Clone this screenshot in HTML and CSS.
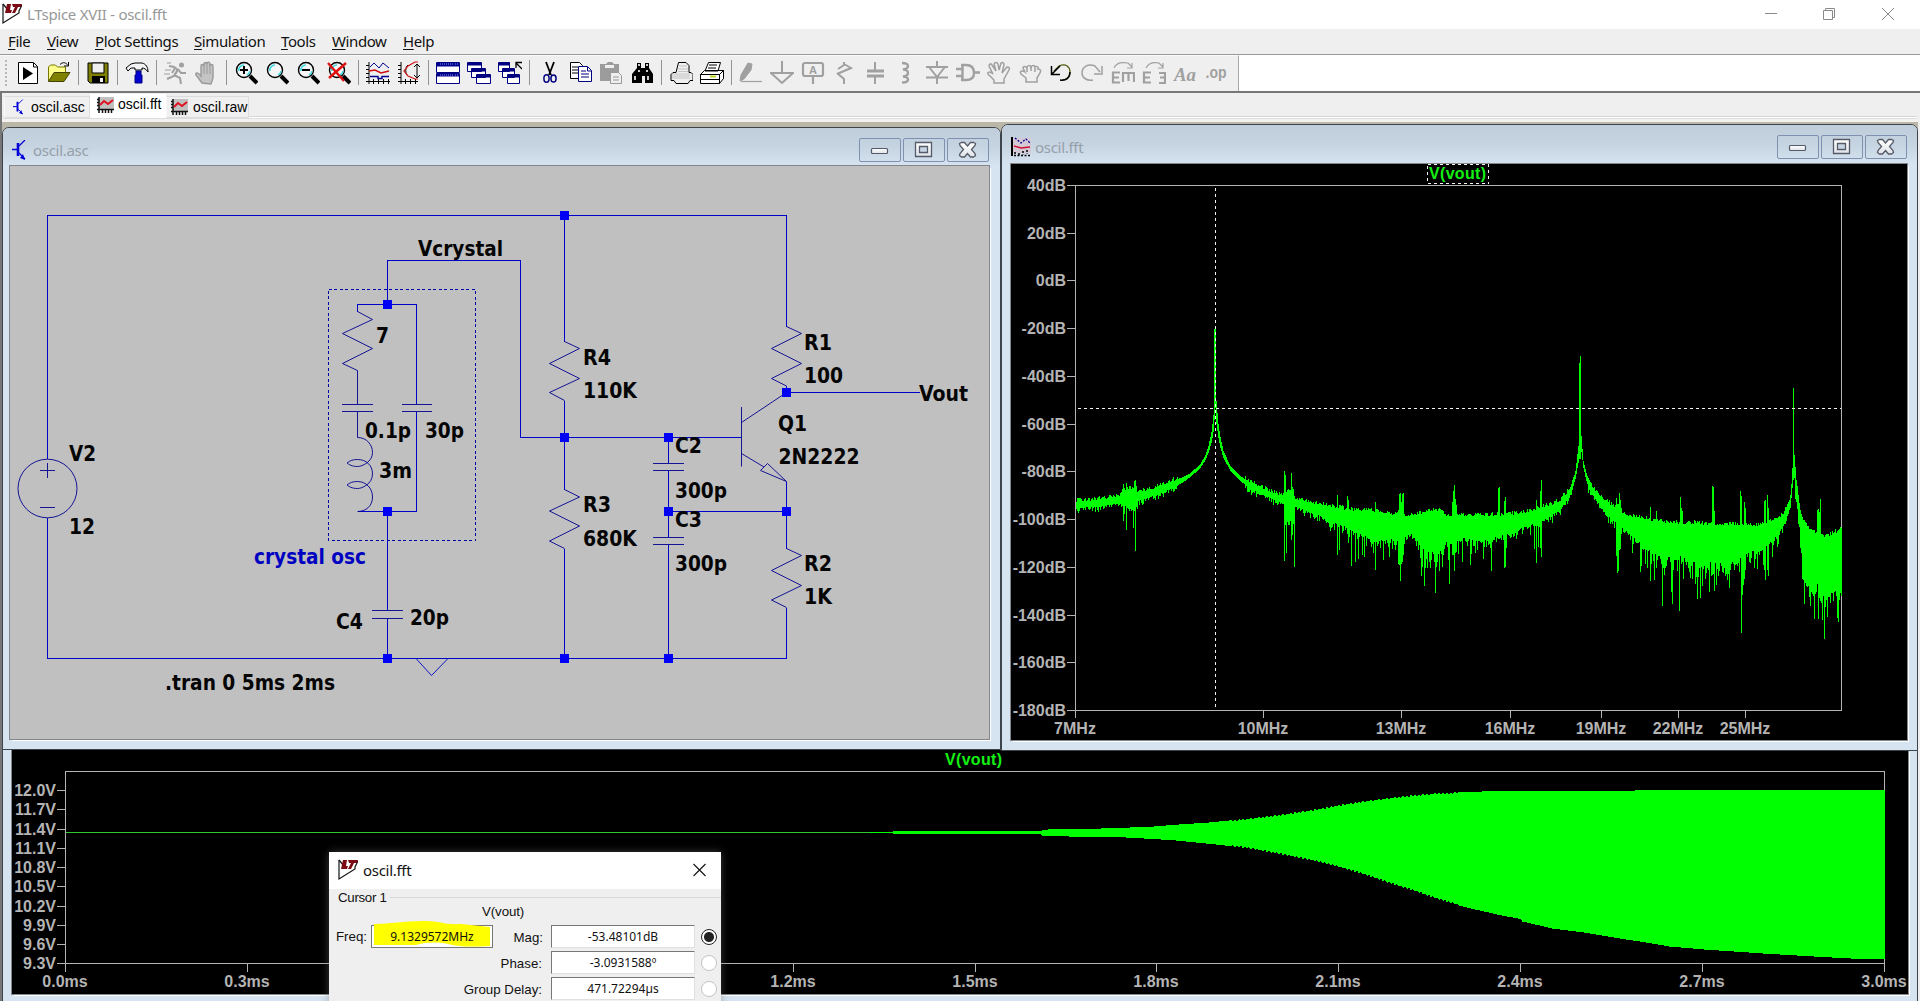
FILE: index.html
```html
<!DOCTYPE html>
<html lang="en">
<head>
<meta charset="utf-8">
<title>LTspice XVII - oscil.fft</title>
<link rel="stylesheet" href="styles.css">
</head>
<body>
<svg width="0" height="0" class="defs">
  <defs>
    <symbol id="lt" viewBox="0 0 20 22">
      <path d="M1 1V20L17 10V8L20 2" fill="none" stroke="#111" stroke-width="1.2"/>
      <path d="M1 1l5 6" stroke="#111" stroke-width="1.2"/>
      <path d="M5 1h4L8 7h2l-1 3H3zM10 1h10l-1 3h-3l-3 6h-3l3-6h-2z" fill="#7a0a14"/>
    </symbol>
    <symbol id="npn" viewBox="0 0 16 20">
      <path d="M0 9.500h5" stroke="#0000d8" stroke-width="1.400"/>
      <path d="M6 3v13" stroke="#0000d8" stroke-width="2.600"/>
      <path d="M7 6l6-6M7 13l6 6" stroke="#0000d8" stroke-width="1.200" fill="none"/>
      <path d="M13 20l-5-2 3-4z" fill="#0000d8"/>
    </symbol>
    <symbol id="wave" viewBox="0 0 17 16">
      <path d="M2 0h15v12H2z" fill="#c0c0c0"/>
      <path d="M2 0v16M0 12.500h17M0 2.500h2M0 5.500h2M0 8.500h2M5.500 12v4M8.500 12v4M11.500 12v4M14.500 12v4" stroke="#111" stroke-width="1.500"/>
      <path d="M3 8l4-4 4 3 5-4" fill="none" stroke="#e01020" stroke-width="2"/>
    </symbol>
    <symbol id="lens" viewBox="0 0 24 24">
      <path d="M15 15l7 7" stroke="#000" stroke-width="4"/>
      <circle cx="9" cy="9" r="7.500" fill="#f6f6f6" stroke="#000" stroke-width="1.400"/>
      <path d="M4 10a5 5 0 0 1 5-6M12 14a5 5 0 0 0 3-4" fill="none" stroke="#3fd8e0" stroke-width="1.600"/>
    </symbol>
    <linearGradient id="btn" x2="0" y2="1"><stop offset="0" stop-color="#fff"/><stop offset="1" stop-color="#dfe3e8"/></linearGradient>
    <symbol id="wmin" viewBox="0 0 40 22"><rect x="11.500" y="9.500" width="16" height="5" rx="1" fill="url(#btn)" stroke="#555b68" stroke-width="1.200"/></symbol>
    <symbol id="wmax" viewBox="0 0 40 22"><path d="M11.500 3.500h16v14h-16zM15.500 7.500v6h8v-6z" fill="url(#btn)" stroke="#555b68" stroke-width="1.300" fill-rule="evenodd"/></symbol>
    <symbol id="wclose" viewBox="0 0 40 22"><path d="M11.500 4.500l2-1h3l3 3.500 3-3.500h3l2 1-.5 2-3.500 4 3.500 4 .5 2-2 1.500h-3l-3-3.500-3 3.500h-3l-2-1.500.5-2 3.500-4-3.500-4z" fill="url(#btn)" stroke="#555b68" stroke-width="1.300"/></symbol>
  </defs>
</svg>

<header class="titlebar">
  <svg class="logo"><use href="#lt"/></svg>
  <span class="app-title">LTspice XVII - oscil.fft</span>
  <svg class="sysbuttons" viewBox="0 0 132 14" fill="none" stroke="#8a8a8a">
    <path d="M0 5.500h12M58.500 2.500h9v9h-9zM60.500 2V.500h9v9h-2M117 0l12 12M129 0l-12 12"/>
  </svg>
</header>

<nav class="menubar">
  <span class="m1"><u>F</u>ile</span><span class="m2"><u>V</u>iew</span><span class="m3"><u>P</u>lot Settings</span><span class="m4"><u>S</u>imulation</span><span class="m5"><u>T</u>ools</span><span class="m6"><u>W</u>indow</span><span><u>H</u>elp</span>
</nav>

<div class="toolrow">
<div class="toolbar">
  <i class="grip"></i>
  <svg viewBox="0 0 24 24"><path d="M2.500 1.500h15l4 4v17h-19z" fill="#fff" stroke="#000"/><path d="M17.500 2v4h4" fill="none" stroke="#000"/><path d="M7 6v13l10-6.500z"/></svg>
  <svg viewBox="0 0 24 24"><path d="M1.500 20V6l2-2h5l2 2h8v5" fill="#ffff8c" stroke="#777700"/><path d="M1.500 20.500L7 11.500h16l-6 9z" fill="#808000" stroke="#444400"/><path d="M13 3.500c3-3 6-2 8 1M21.500 1v4H17" fill="none" stroke="#000"/></svg>
  <i class="sep"></i>
  <svg viewBox="0 0 24 24"><path d="M2 2h20v20H4l-2-2z" fill="#808000" stroke="#000"/><path d="M6 2h12v10H6z" fill="#efefef" stroke="#000"/><path d="M6 15h13v7H6z"/><path d="M14 17h3v4h-3z" fill="#efefef"/></svg>
  <i class="sep"></i>
  <svg viewBox="0 0 24 24"><path d="M1 7l5-4 4-1h7c4 1 6 4 6 9-2-3-4-4-6-4v2h-7V7H6l-3 3z" fill="#f4f4f4" stroke="#000"/><path d="M11 10h5v4h1v8h-7v-8h1z" fill="#0000d0" stroke="#000080"/></svg>
  <i class="sep"></i>
  <svg viewBox="0 0 24 24" fill="none" stroke="#a0a0a0" stroke-width="2"><circle cx="17.500" cy="4" r="2.500" fill="#a0a0a0" stroke="none"/><path d="M5 5l5 1 4 3-4 6-7 3M14 8l3 4h5M10 14l6 3 1 6M11 7l-3 5"/><path d="M3 2h4M1 9h6M0 13h6M13 9l-3 5" stroke-width="1.200"/></svg>
  <svg viewBox="0 0 24 24"><path d="M7 22l-6-8c-1-3 2-3 5 1V5c0-2 3-2 3 0V3c0-2 3-2 3 0 0-3 3-2 3 0v2c0-2 3-2 3 0v12l-2 6z" fill="#c4c4c4" stroke="#999" stroke-width="1.400"/><path d="M9 4v9M12 3v10M15 4v9" stroke="#999"/></svg>
  <i class="sep"></i>
  <svg viewBox="-1 0 24 24"><use href="#lens" width="24" height="24"/><path d="M5 9h8M9 5v8" stroke="#000" stroke-width="2"/></svg>
  <svg viewBox="-1 0 24 24"><use href="#lens" width="24" height="24"/></svg>
  <svg viewBox="-1 0 24 24"><use href="#lens" width="24" height="24"/><path d="M5 9h8" stroke="#000" stroke-width="2"/></svg>
  <svg viewBox="-1 0 24 24"><use href="#lens" width="24" height="24"/><path d="M0 2l16 18M18 2L1 17" stroke="#e01010" stroke-width="2.400"/></svg>
  <i class="sep"></i>
  <svg viewBox="0 0 24 24" fill="none"><path d="M3 1v22M0 20.500h24M0 4.500h3M0 8.500h3M0 12.500h3M0 16.500h3M7.500 18v5M12.500 18v5M17.500 18v5M22.500 18v5" stroke="#000"/><path d="M4 6l4-4 5 5 4-5 6 5" stroke="#000090"/><path d="M3 10l6-1 6 3 8-2" stroke="#d01010" stroke-width="1.400"/><path d="M4 15.500h8v2h4v-2h7" stroke="#000090" stroke-width="1.400"/></svg>
  <svg viewBox="-1 0 24 24" fill="none"><path d="M3 1v22M0 20.500h20M0 4.500h3M0 8.500h3M0 12.500h3M0 16.500h3M7.500 18v5M12.500 18v5M17.500 18v5M10 4c-3 2-3 9 0 11M19 3v14M16 6l3-3 3 3M16 14l3 3 3-3" stroke="#000"/><path d="M20 1h-3l-7 4-4 5 4 5 7 3h3" stroke="#d01010" stroke-width="1.200"/></svg>
  <i class="sep"></i>
  <svg viewBox="0 0 24 24"><g stroke="#000080" fill="#fff"><path d="M.500 1.500h23v10H.5zM.500 12.500h23v10H.5z"/></g><path d="M1 1.500h22v4H1zM1 12.500h22v3H1z" fill="#000090"/><path d="M4 3h13M19 3h3M4 14h13M19 14h3" stroke="#8890e0" stroke-dasharray="1 1"/></svg>
  <svg viewBox="0 0 24 24" fill="#fff" stroke="#000080"><path d="M.500 1.500h14v9H.5zM4.500 7.500h14v9h-14zM9.500 13.500h14v9h-14z"/><path d="M1 3h13M5 9h13M10 15h13" stroke-width="3"/></svg>
  <svg viewBox="0 0 24 24" fill="#fff" stroke="#000080"><path d="M.500 1.500h11v9H.5zM4.500 7.500h12v9h-12zM9.500 13.500h12v9h-12z"/><path d="M1 3h11M5 9h11M10 15h11" stroke-width="3"/><path d="M18 7V1.500h6M18 2l6 6" stroke="#000" stroke-width="1.300" fill="none"/></svg>
  <i class="sep"></i>
  <svg viewBox="-1 0 24 24" fill="none"><path d="M8 1l5 13M16 1l-5 13" stroke="#000" stroke-width="1.800"/><ellipse cx="8.500" cy="17.500" rx="2.600" ry="3.800" stroke="#000080" stroke-width="1.500"/><ellipse cx="15.500" cy="17.500" rx="2.600" ry="3.500" stroke="#000080" stroke-width="1.500"/></svg>
  <svg viewBox="-1 0 24 24"><path d="M1.500 1.500h9l3 3v13h-12z" fill="#fff" stroke="#000"/><path d="M3 6h6M3 9h6M3 12h6" stroke="#000"/><path d="M9.500 5.500h9l4 4v11h-13z" fill="#fff" stroke="#000080"/><path d="M18.500 6v4h4M12 10h5M12 13h8M12 16h8" stroke="#000080" fill="none"/></svg>
  <svg viewBox="0 0 24 24"><path d="M1 3h6l2-2h4l2 2h5v17H1z" fill="#9c9c9c"/><path d="M6 4h9v3H6z" fill="#efefef"/><path d="M11.500 11.500h8l3 3v8h-11z" fill="#efefef" stroke="#999"/><path d="M14 16h6M14 19h6" stroke="#999"/></svg>
  <svg viewBox="-1 0 24 24"><path d="M6 2h4v5h4V2h4v5l4 6v9h-8v-7h-3v7H1v-9l5-6z"/><path d="M8 3v2M16 3v2M4 15v4M17 15v4M8 9v2M16 9v2" stroke="#fff" stroke-width="1.600"/></svg>
  <i class="sep"></i>
  <svg viewBox="-1.500 0 24 24" fill="#efefef" stroke="#000"><path d="M5.500 11.500L8 1.500h7.500l3 3v7h2l2 2v6h-3l-2 3h-12l-2-3h-3v-6l2-2z"/><path d="M2 13h18M2 15h18M2 17h18M9 5h7M8 8h9M8 10.500h9" stroke="#999" stroke-dasharray="1 1"/></svg>
  <svg viewBox="0 0 24 24" fill="#fff" stroke="#000"><path d="M5 10L8.500 1.500h12L18 10zM.500 13.500l4-4h19l-4 4zM.500 13.500h19v9H.5zM19.500 13.500l4-4v8l-4 5z"/><path d="M9 4h8M8 7h8" /><path d="M10 15.500h6" stroke="#b8d820" stroke-width="2"/><path d="M1 18.500h18"/></svg>
  <i class="sep"></i>
  <svg viewBox="0 0 24 24" fill="#a0a0a0" stroke="#a0a0a0"><path d="M9 2l4 1-1 6-7 9-4 2 1-6z"/><path d="M2 20.500h21" stroke-width="1.200"/></svg>
  <svg viewBox="0 0 24 24" fill="none" stroke="#a0a0a0" stroke-width="2"><path d="M12 0v12M1 12h22L12 22z"/></svg>
  <svg viewBox="0 0 24 24" fill="none" stroke="#a0a0a0" stroke-width="2.200"><rect x="2" y="2" width="20" height="13" rx="2"/><path d="M12 15v8"/><text x="12" y="12.500" class="ico-a">A</text></svg>
  <svg viewBox="0 0 24 24" fill="none" stroke="#a0a0a0" stroke-width="2"><path d="M12 1v3l-6 4M5 13l14-6-7-4M5 12l7 6v5"/></svg>
  <svg viewBox="0 0 24 24" fill="none" stroke="#a0a0a0"><path d="M12 1v9M12 15v8" stroke-width="2"/><path d="M4 10h17M4 15h17" stroke-width="3"/></svg>
  <svg viewBox="0 0 24 24" fill="none" stroke="#a0a0a0" stroke-width="2.400"><path d="M8 2c4 0 6 1 6 3s-2 3-5 3.500c3 0 5 1.500 5 3.500s-2 3-5 3.500c3 0 5 1 5 3 0 3-3 3-6 3"/></svg>
  <svg viewBox="0 0 24 24" fill="none" stroke="#a0a0a0" stroke-width="2"><path d="M12 0v5M1 6h22M4 6l8 10 8-10M1 16.500h22M12 17v6"/></svg>
  <svg viewBox="0 0 24 24" fill="none" stroke="#a0a0a0" stroke-width="2.400"><path d="M5 4h5c6 0 8 4 8 8s-2 7-8 7H5M6.500 4v15M0 8h6M0 15h6M18 11.500h6"/></svg>
  <svg viewBox="0 0 24 24" fill="none" stroke="#a0a0a0" stroke-width="1.500"><path d="M7 22v-3l-6-6c-1-2 2-3 5 0L2 5c0-2 2-3 3-1l4 6-2-7c1-2 3-2 4 0l1 6 2-7c2-1 3 0 3 2l-2 8 5-6c2 0 3 1 2 3l-5 9v4z"/></svg>
  <svg viewBox="-1 0 24 24" fill="none" stroke="#a0a0a0" stroke-width="1.500"><path d="M7 21v-4l-5-4c-2-3 1-4 4-2l-2-4c0-2 3-2 4 0 0-3 3-3 4-1 1-2 4-2 4 0 2-1 4 0 3 2 3 0 3 2 2 4l-3 5v4z"/><path d="M8 7v4M12 6v4M16 7v4"/></svg>
  <svg viewBox="0 0 24 24" fill="none" stroke="#000"><path d="M5 10l5-5c7-3 11 1 11 6 0 5-4 8-8 8" stroke="#555c10" stroke-width="1.300"/><path d="M21 11c0 6-4 9-10 8M2.500 5v8.500H11M3 13l8-8" stroke-width="1.500"/></svg>
  <svg viewBox="0 0 24 24" fill="none" stroke="#a0a0a0" stroke-width="1.500"><path d="M20 11l-5-6C8 2 2 6 2 12c0 5 5 8 11 7M22 5v8h-8"/></svg>
  <svg viewBox="0 0 24 24" fill="none" stroke="#a0a0a0" stroke-width="1.200"><path d="M3 7c3-6 8-6 14-5l4 4M21 2v5h-5"/><path d="M9 11.500H2v10h7M2 16.500h6M12 21v-9h11v9M17.500 12v8" stroke-width="2.200"/></svg>
  <svg viewBox="0 0 24 24" fill="none" stroke="#a0a0a0" stroke-width="1.200"><path d="M4 7c3-6 8-6 13-5l4 4M21 2v5h-5"/><path d="M9 11.500H2v10h7M2 16.500h6M17 12h6v10h-6M23 16.500h-5" stroke-width="2.200"/></svg>
  <svg viewBox="0 0 24 24"><text x="12" y="19.500" class="ico-aa" textLength="22" lengthAdjust="spacingAndGlyphs">Aa</text></svg>
  <svg viewBox="0 0 24 24"><text x="12" y="17" class="ico-op" textLength="21" lengthAdjust="spacingAndGlyphs">.op</text></svg>
</div>
</div>

<div class="tabbar">
  <div class="tab t-asc"><svg class="i-npn"><use href="#npn"/></svg><span>oscil.asc</span></div>
  <div class="tab t-fft active"><svg class="i-wave"><use href="#wave"/></svg><span>oscil.fft</span></div>
  <div class="tab t-raw"><svg class="i-wave"><use href="#wave"/></svg><span>oscil.raw</span></div>
</div>

<main class="mdi">
  <section class="win raw">
    <svg class="client" viewBox="12 750 1896 244">
      <g class="axis" id="raw-axis"><path d="M65.500 972V771.500H1884.500V972M57 963.500H1884.500"/></g>
      <g class="lbl" id="raw-labels"></g>
      <path class="thin" d="M66 832.500H895"/>
      <path class="trace" id="raw-trace"/>
      <text class="trace-name" x="945" y="765" textLength="57">V(vout)</text>
    </svg>
  </section>

  <section class="win asc">
    <div class="caption">
      <svg class="i-npn"><use href="#npn"/></svg><span>oscil.asc</span>
      <div class="wbtns"><svg><use href="#wmin"/></svg><svg><use href="#wmax"/></svg><svg><use href="#wclose"/></svg></div>
    </div>
    <svg class="client" viewBox="10 166 979 573">
      <g class="wire">
        <path d="M47.500 459V215.500H786.500V326.500M564.500 215.500V341.500M564.500 400.500V489.500M564.500 548.500V658.500M47.500 518V658.500H786.500V607.500M387.500 304.500V260.500H520.500V437.500H741.500M357.500 311.500V304.500H416.500V404.500M416.500 411.500V511.500H357.500M387.500 511.500V610.500M387.500 618.500V658.500M668.500 437.500V463.500M668.500 470.500V537.500M668.500 544.500V658.500M668.500 511.500H786.500M786.500 386V392.500H920M786.500 481.500V548.500"/>
      </g>
      <g class="part">
        <path d="M357.500 311.500L372.500 319.500 342.500 333.500 372.500 348.500 342.500 363.500 357.500 370.500V404.500M342 404.500H373M342 411.500H373M357.500 411.500V437.500M402 404.500H432M402 411.500H432M372 610.500H403M372 618.500H403M653 463.500H684M653 470.500H684M653 537.500H684M653 544.500H684"/>
        <path d="M357.500 437.500C367 437.500 372.500 445 372.500 452.500 372.500 462 362 466.500 357.500 466.500 352 466.500 349 464.500 347 463 350 460.500 353 459.500 357.500 459.500 366 459.500 372.500 465 372.500 474 372.500 484 362 488.500 357.500 488.500 352 488.500 349 486.500 347 485 350 482.500 353 481.500 357.500 481.500 366 481.500 372.500 488 372.500 497 372.500 506 366 511.500 357.500 511.500"/>
        <path d="M564.500 341.500L579.500 348.500 549.500 363.500 579.500 378.500 549.500 392.500 564.500 400.500M564.500 489.500L579.500 497 549.500 511 579.500 526 549.500 541 564.500 548.500M786.500 326.500L801.500 333.500 771.500 348.500 801.500 363.500 771.500 378.500 786.500 386M786.500 548.500L801.500 555.500 771.500 570.500 801.500 585.500 771.500 600 786.500 607.500"/>
        <path d="M741.500 407V466.500M741.500 422.500L786.500 392.500M741.500 453.500L764 467M767.500 463.500L760.500 470.500 786.500 481.500zM40 470.500H55M47.500 463V478M40 507.500H55"/>
        <ellipse cx="47.500" cy="488.500" rx="29.500" ry="29.300"/>
      </g>
      <path class="box" d="M328.500 289.500H475.500V540.500H328.500z"/>
      <path class="gnd" d="M416 658.500L431.500 675.500 448 658.500"/>
      <path class="nodes" d="M560 211h9v9h-9zM383 300h9v9h-9zM383 507h9v9h-9zM383 654h9v9h-9zM560 433h9v9h-9zM560 654h9v9h-9zM664 433h9v9h-9zM664 507h9v9h-9zM664 654h9v9h-9zM782 388h9v9h-9zM782 507h9v9h-9z"/>
      <g class="sch" id="sch-labels">
        <text x="69" y="461" textLength="27">V2</text><text x="69" y="533.500" textLength="26">12</text>
        <text x="254" y="563.500" textLength="112" class="comment">crystal osc</text>
        <text x="418" y="255.500" textLength="85">Vcrystal</text>
        <text x="376" y="342.500" textLength="13">7</text>
        <text x="365" y="438" textLength="46">0.1p</text><text x="425" y="438" textLength="39">30p</text>
        <text x="379" y="477.500" textLength="33">3m</text>
        <text x="336" y="629" textLength="27">C4</text><text x="410" y="624.500" textLength="39">20p</text>
        <text x="165" y="689.500" textLength="170">.tran 0 5ms 2ms</text>
        <text x="583" y="365" textLength="28">R4</text><text x="583" y="398" textLength="54">110K</text>
        <text x="583" y="512" textLength="28">R3</text><text x="583" y="545.500" textLength="54">680K</text>
        <text x="675" y="453" textLength="27">C2</text><text x="675" y="497.500" textLength="52">300p</text>
        <text x="675" y="527" textLength="27">C3</text><text x="675" y="570.500" textLength="52">300p</text>
        <text x="804" y="350" textLength="28">R1</text><text x="804" y="382.500" textLength="39">100</text>
        <text x="778" y="430.500" textLength="29">Q1</text><text x="778.500" y="463.500" textLength="81">2N2222</text>
        <text x="919" y="400.500" textLength="49">Vout</text>
        <text x="804" y="570.500" textLength="28">R2</text><text x="804" y="604" textLength="28">1K</text>
      </g>
    </svg>
  </section>

  <section class="win fft">
    <div class="caption">
      <svg class="i-plot" viewBox="0 0 20 20"><path d="M2 1h18v15H2z" fill="#d4c8d4"/><path d="M1 0v19" stroke="#000" stroke-width="2"/><path d="M3 18.500h17M4 15v4M8 16v3M12 14v4M16 13v4" stroke="#000" stroke-width="1.500" stroke-dasharray="2 1.500"/><path d="M4 1l6 5 5-4 4 4" stroke="#000090" stroke-width="1.300" fill="none" stroke-dasharray="2 1.500"/><path d="M3 9l7 2 9-1" stroke="#d01030" stroke-width="1.400" fill="none"/></svg><span>oscil.fft</span>
      <div class="wbtns"><svg><use href="#wmin"/></svg><svg><use href="#wmax"/></svg><svg><use href="#wclose"/></svg></div>
    </div>
    <svg class="client" viewBox="1011 164 896 576">
      <g class="axis" id="fft-axis"><path d="M1075.500 718V185.500H1841.500V710.500M1067 710.500H1841.500"/></g>
      <g class="lbl" id="fft-labels"></g>
      <path class="trace" id="fft-trace"/>
      <path class="cursor" d="M1215.500 188V708M1078 408.500H1841"/>
      <path class="cursor" d="M1427.500 164.500H1488.500V183.500H1427.500z"/>
      <text class="trace-name" x="1429" y="179" textLength="57">V(vout)</text>
    </svg>
  </section>

  <section class="dialog">
    <div class="dlg-title"><svg class="logo"><use href="#lt"/></svg><span>oscil.fft</span><svg class="dlg-x" viewBox="0 0 13 14"><path d="M.500 1l12 12M12.500 1l-12 12" stroke="#111" stroke-width="1.100"/></svg></div>
    <div class="legend"><span>Cursor 1</span></div>
    <div class="sig">V(vout)</div>
    <div class="grid">
      <label>Freq:</label>
      <div class="field hl"><svg viewBox="0 0 122 28"><path d="M3 3C20 3 30 0 55 0c14 0 18 4 35 3l29 3v19c-20 1-30 1-42-2-12-2-20-2-32 1H3z"/></svg><span>9.1329572MHz</span></div>
      <label>Mag:</label><div class="field">-53.48101dB</div><b class="radio on"></b>
      <label class="wide">Phase:</label><div class="field">-3.0931588º</div><b class="radio"></b>
      <label class="wide">Group Delay:</label><div class="field">471.72294µs</div><b class="radio"></b>
    </div>
  </section>
</main>
<script src="plots.js"></script>
</body>
</html>
```

FILE: styles.css
```css
* { box-sizing: border-box; }
body { margin: 0; width: 1920px; height: 1001px; overflow: hidden; background: #efefef; display: flex; flex-direction: column; font-family: "Noto Sans", "Open Sans", sans-serif; }
.defs { position: absolute; }
svg { display: block; flex: none; }
text { white-space: pre; }

.titlebar { height: 29px; background: #fff; display: flex; align-items: center; padding-left: 2px; flex: none; }
.logo { width: 20px; height: 22px; }
.titlebar .logo { margin-top: -2px; }
.app-title { color: #989898; font-size: 15px; letter-spacing: -.27px; margin-left: 5px; line-height: 26px; padding-bottom: 2px; flex: 1; }
.sysbuttons { width: 132px; height: 14px; margin-right: 23px; }

.menubar { height: 26px; flex: none; border-bottom: 1px solid #999; display: flex; padding-left: 8px; font-size: 15px; letter-spacing: -.4px; line-height: 24px; color: #111; white-space: nowrap; }
.menubar span { flex: none; }
.menubar u { text-underline-offset: 2px; }
.m1 { width: 39px; } .m2 { width: 48px; } .m3 { width: 99px; } .m4 { width: 87px; } .m5 { width: 51px; } .m6 { width: 71px; }

.toolrow { height: 38px; flex: none; background: #fff; border-bottom: 2px solid #777; display: flex; }
.toolbar { width: 1239px; background: #efefef; border-top: 1px solid #fafafa; border-right: 1px solid #a8a8a8; display: flex; align-items: center; gap: 7px; padding: 0 0 2px 5px; }
.toolbar svg { width: 24px; height: 24px; }
.grip { width: 4px; height: 26px; flex: none; background: repeating-linear-gradient(#b8b8b8 0 2px, transparent 2px 4px) 0 0 / 2px 100% no-repeat; }
.sep { width: 1px; height: 25px; background: #929292; flex: none; }
.ico-a { font: bold 11px "Liberation Sans", sans-serif; fill: #a0a0a0; stroke: none; text-anchor: middle; }
.ico-aa { font: italic bold 19px "Liberation Serif", serif; fill: #a0a0a0; text-anchor: middle; }
.ico-op { font: bold 16px "Liberation Sans", sans-serif; fill: #a0a0a0; text-anchor: middle; }

.tabbar { height: 29px; flex: none; display: flex; align-items: flex-start; border-left: 2px solid #777; background: linear-gradient(#efefef 23px, #d6d6d6 23px 24px, #fff 24px 25px, #ddd 25px 26px, #f4f2ee 26px); margin-right: 3px; padding: 1px 0 0 2px; }
.tab { display: flex; align-items: center; height: 22px; margin-top: 2px; border: 1px solid #dcdcdc; border-left-color: #f8f8f8; background: #f0f0f0; font: 14px "Liberation Sans", sans-serif; letter-spacing: 0; }
.tab span { margin-top: -1px; }
.tab.active { background: #fff; height: 24px; margin-top: 0; border-color: #fff; align-items: flex-start; padding-top: 2px; }
.t-asc { width: 86px; padding-left: 8px; gap: 6px; }
.t-fft { width: 76px; padding-left: 6px; gap: 4px; }
.t-raw { width: 83px; padding-left: 4px; gap: 5px; }
.tab .i-npn { width: 12px; height: 16px; }
.tab.active span { line-height: 16px; }
.i-wave { width: 17px; height: 16px; }

.mdi { position: relative; flex: 1; background: #bab7a8; border-left: 2px solid #777; margin-right: 2px; overflow: hidden; }
.win { position: absolute; background: #d6e3f1; border: 1px solid #3d444c; display: flex; flex-direction: column; }
.caption { display: flex; align-items: center; background: linear-gradient(#c0cddb, #c6d3e0 50%, #d6e3f1); color: #96a0aa; font-size: 15px; letter-spacing: -.3px; flex: none; }
.wbtns { display: flex; gap: 2px; margin-left: auto; }
.wbtns svg { width: 42px; height: 24px; border: 1px solid #8090b0; border-radius: 2px; }
.win .client { outline: 1px solid #83878c; box-shadow: 2px 2px 0 #fff; }

/* document windows, placed on the MDI desktop */
.asc { left: 0; top: 5px; width: 999px; height: 623px; border-radius: 7px 7px 0 0; overflow: hidden; }
.asc .caption { height: 38px; padding: 6px 11px 0 9px; gap: 5px; }
.asc .caption .i-npn { width: 16px; height: 20px; }
.asc .client { width: 979px; height: 573px; margin-left: 7px; background: #c0c0c0; }
.fft { left: 999px; top: 2px; width: 917px; height: 627px; border-radius: 7px 7px 0 0; overflow: hidden; }
.fft .caption { height: 39px; padding: 4px 10px 0 9px; gap: 4px; }
.i-plot { width: 20px; height: 20px; }
.fft .client { width: 896px; height: 576px; margin-left: 9px; background: #000; }
.raw { left: 0; top: 620px; width: 1916px; height: 400px; }
.raw .client { width: 1896px; height: 244px; margin: 7px 0 0 9px; background: #000; }

.axis { stroke: #b4b4b4; fill: none; shape-rendering: crispEdges; }
.lbl { fill: #b4b4b4; font: bold 16px "Liberation Sans", sans-serif; }
.trace { stroke: #0f0; stroke-width: 1; fill: none; shape-rendering: crispEdges; }
.thin { stroke: #30c830; }
.trace-name { fill: #14f014; font: bold 16px "Liberation Sans", sans-serif; }
.cursor { stroke: #f4f4f4; fill: none; stroke-dasharray: 3 3; shape-rendering: crispEdges; }

.wire { stroke: #0000c8; fill: none; shape-rendering: crispEdges; }
.part, .gnd { stroke: #000090; fill: none; stroke-width: .9; }
.gnd { stroke: #0000c8; }
.box { stroke: #0000a8; fill: none; stroke-dasharray: 3 2.500; shape-rendering: crispEdges; }
.nodes { fill: #0000f4; }
.sch { font: bold 21px "DejaVu Sans Condensed", "DejaVu Sans", sans-serif; font-stretch: condensed; fill: #050505; }
.sch .comment { fill: #0000c0; }

/* floating cursor dialog */
.dialog { position: absolute; left: 327px; top: 730px; width: 392px; height: 200px; background: #efefef; box-shadow: 0 0 8px rgba(120,120,120,.5); font: 13.300px "Liberation Sans", sans-serif; color: #111; }
.dlg-title { background: #fff; height: 37px; display: flex; align-items: center; padding: 0 15px 2px 9px; font: 15px "Noto Sans", sans-serif; letter-spacing: -.3px; gap: 5px; }
.dlg-x { width: 13px; height: 14px; margin-left: auto; }
.legend { display: flex; height: 16px; align-items: center; padding-left: 9px; gap: 3px; letter-spacing: -.3px; }
.legend::after { content: ""; flex: 1; height: 1px; background: #d8d8d8; }
.sig { height: 20px; line-height: 13px; padding-left: 153px; letter-spacing: -.1px; }
.grid { display: grid; grid-template-columns: 35px 122px 50px 144px 20px; row-gap: 3px; padding-left: 7px; align-items: center; }
.grid label { text-align: right; white-space: nowrap; padding-top: 1px; }
.grid label:first-child { text-align: left; padding-top: 0; }
.grid .wide { grid-column: 1 / 4; padding-right: 1px; }
.field { height: 23px; border: 1px solid #777; background: #fff; text-align: center; line-height: 22px; font-family: "Noto Sans", sans-serif; font-size: 12px; }
.grid .field:not(.hl) { margin-left: 8px; margin-right: -8px; border-right-color: #e0e0e0; border-bottom-color: #e0e0e0; }
.hl { position: relative; line-height: 21px; }
.hl svg { position: absolute; left: -1px; top: -5px; width: 122px; height: 28px; fill: #ffff00; }
.hl span { position: relative; }
.radio { width: 16px; height: 16px; border-radius: 50%; border: 1px solid #c4c4c4; background: #fff; margin-left: 14px; }
.radio.on { border-color: #222; background: radial-gradient(circle, #222 0 4.500px, #fff 5.500px); }
```

FILE: plots.js
```js
const NS = 'http://www.w3.org/2000/svg';
let seed = 41;
function rnd() { seed = (seed * 16807) % 2147483647; return seed / 2147483647; }

function label(group, text, x, y, anchor) {
  const t = document.createElementNS(NS, 'text');
  t.setAttribute('x', x); t.setAttribute('y', y); t.setAttribute('text-anchor', anchor);
  t.textContent = text;
  document.getElementById(group).append(t);
}
function line(group, d) {
  const p = document.createElementNS(NS, 'path');
  p.setAttribute('d', d);
  document.getElementById(group).append(p);
}
function at(env, x) {
  let i = 0;
  while (i < env.length - 2 && env[i + 1][0] < x) i++;
  const a = env[i], b = env[i + 1], k = Math.min(1, (x - a[0]) / (b[0] - a[0]));
  return [a[1] + (b[1] - a[1]) * k, a[2] + (b[2] - a[2]) * k];
}

// schematic labels stretch their glyphs, not the gaps between them
document.querySelectorAll('#sch-labels text').forEach(t => t.setAttribute('lengthAdjust', 'spacingAndGlyphs'));

// FFT window axes: 40 dB down to -180 dB, logarithmic frequency
for (let i = 0; i < 12; i++) {
  const y = Math.round(185 + i * 47.73);
  label('fft-labels', (40 - i * 20) + 'dB', 1066, y + 6, 'end');
  line('fft-axis', `M1067 ${y + .5}H1075`);
}
[[7, 1075], [10, 1263], [13, 1401], [16, 1510], [19, 1601], [22, 1678], [25, 1745]].forEach(([f, x]) => {
  label('fft-labels', f + 'MHz', x, 734, 'middle');
  line('fft-axis', `M${x + .5} 710V718`);
});

// spectrum envelope: x, upper edge, lower edge
const spec = [[1076,502,508],[1100,500,506],[1120,497,503],[1122,491,506],[1136,489,506],[1137,492,501],[1147,491,498],[1167,484,490],[1180,478,484],[1190,473,477],[1200,464,468],[1205,455,460],[1208,446,453],[1211,432,443],[1213,415,432],[1214,329,420],[1215,329,408],[1216,401,424],[1218,424,438],[1220,437,448],[1223,451,458],[1230,466,471],[1240,476,481],[1250,483,489],[1267,491,497],[1283,497,503],[1284,492,520],[1294,493,520],[1295,500,506],[1300,501,508],[1333,508,521],[1353,511,530],[1373,512,540],[1387,514,538],[1400,516,540],[1410,517,533],[1427,513,550],[1437,511,552],[1447,517,540],[1460,517,536],[1480,516,541],[1507,516,533],[1527,513,526],[1547,507,518],[1560,501,509],[1570,489,495],[1575,471,479],[1578,446,463],[1579,363,459],[1580,356,459],[1581,436,452],[1583,461,468],[1586,473,481],[1590,485,492],[1600,498,506],[1613,507,520],[1627,516,532],[1640,519,543],[1660,522,556],[1680,525,556],[1693,524,561],[1717,527,562],[1730,525,563],[1743,527,553],[1760,526,549],[1773,522,540],[1783,515,525],[1790,499,507],[1792,470,487],[1793,388,480],[1794,455,478],[1796,482,498],[1800,512,534],[1802,519,565],[1805,525,583],[1813,534,590],[1827,538,590],[1841,530,592]];
// isolated spikes: x -> [top, bottom], null keeps the envelope
const spikes = {
  1123:[484,521],1124:[488,514],1126:[483,530],1129:[486,511],1133:[488,528],1134:[481,511],1135:[480,551],
  1284:[471,561],1285:[475,525],1286:[492,553],1289:[490,525],1291:[473,540],1292:[487,535],1293:[489,524],1294:[496,567],
  1337:[495,555],1339:[null,550],1347:[496,null],1348:[500,543],1351:[null,566],1355:[null,562],1358:[null,559],1362:[null,555],1375:[502,570],1383:[null,560],
  1398:[510,564],1399:[494,565],1400:[493,581],1401:[502,564],1402:[494,562],1403:[493,555],1421:[null,576],1422:[null,567],1424:[null,586],1427:[null,568],1430:[null,568],1435:[null,593],1437:[null,562],
  1449:[null,584],1452:[502,555],1453:[491,555],1454:[485,571],1455:[499,553],1456:[505,552],1462:[null,562],1470:[null,565],1491:[null,571],1498:[488,null],1499:[487,null],1504:[501,568],1505:[497,567],
  1534:[null,549],1536:[500,563],1538:[null,547],1540:[491,548],1541:[480,557],1616:[498,556],1617:[504,573],1618:[504,571],1619:[493,550],1620:[500,549],
  1640:[null,572],1645:[null,564],1650:[507,581],1656:[511,568],1662:[null,606],1664:[null,575],1671:[null,592],1672:[null,604],1679:[null,611],1680:[497,null],1681:[508,null],1682:[511,null],
  1695:[null,584],1697:[null,599],1700:[null,598],1705:[null,579],1712:[486,null],1713:[487,null],1714:[511,591],1723:[null,573],1729:[null,588],1740:[491,null],1741:[496,633],1742:[null,595],1743:[null,585],1744:[502,579],1745:[508,570],
  1757:[null,569],1764:[501,570],1765:[500,580],1767:[495,570],1768:[508,576],1817:[510,584],1818:[509,619],1819:[512,598],1820:[499,601],1822:[null,620],1824:[null,639],1827:[null,617],1830:[null,603]
};
let d = '';
for (let x = 1076; x <= 1841; x++) {
  let [t, b] = at(spec, x);
  const th = b - t, peak = b < 485;
  if (!peak) {
    t -= rnd() * 4;
    b += Math.min(-Math.log(1 - rnd() * .98), 3) * Math.min(th, 34) * .3;
  }
  const s = spikes[x];
  if (s) { if (s[0]) t = s[0]; if (s[1]) b = s[1]; }
  d += `M${x + .5} ${Math.round(t)}V${Math.round(b)}`;
}
document.getElementById('fft-trace').setAttribute('d', d);

// transient window axes
for (let i = 0; i < 10; i++) {
  const y = Math.round(790 + i * 19.26);
  label('raw-labels', (12 - i * .3).toFixed(1) + 'V', 56, y + 6, 'end');
  line('raw-axis', `M57 ${y + .5}H66`);
}
// the dialog covers the second and third time marks
for (const i of [0, 1, 4, 5, 6, 7, 8, 9, 10]) {
  const x = Math.round(65 + i * 181.9);
  label('raw-labels', (i * .3).toFixed(1) + 'ms', x, 987, 'middle');
  line('raw-axis', `M${x + .5} 963V972`);
}
const env = [[870,832,833],[892,832,833],[893,831,834],[1040,831,834],[1042,830,836],[1053,829,836],[1084,829,837],[1117,828,837],[1153,826.5,839],[1176,824.7,840.5],[1211,822.3,844],[1246,818.7,848],[1282,814.3,854.5],[1317,809,861.5],[1340,804.7,867.5],[1364,801,874.5],[1387,798,882.5],[1411,795.3,890],[1434,793.3,898],[1464,792,907],[1499,791,915],[1520,791,919],[1522,791,921.5],[1552,791,928.5],[1587,791.3,933],[1622,791,939],[1646,790,942.5],[1669,790,946.5],[1704,790,949.5],[1763,790,953.5],[1822,790,957],[1851,790,958.5],[1884,790,959]];
d = '';
for (let x = 870; x <= 1884; x++) {
  const [t, b] = at(env, x);
  const ripple = x > 1230 && x < 1460 && x % 4 < 2 ? 1 : 0;
  d += `M${x + .5} ${Math.round(t) + ripple}V${Math.round(b) - ripple}`;
}
document.getElementById('raw-trace').setAttribute('d', d);
```
